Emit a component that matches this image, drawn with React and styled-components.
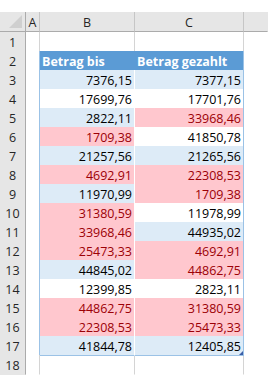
import React from "react";
import styled, { createGlobalStyle } from "styled-components";

const GlobalStyle = createGlobalStyle`
  html, body {
    margin: 0;
    padding: 0;
    background: #ffffff;
  }
  body {
    font-family: "Open Sans", "Liberation Sans", sans-serif;
  }
`;

const rows = [
  { b: "7376,15", c: "7377,15" },
  { b: "17699,76", c: "17701,76" },
  { b: "2822,11", c: "33968,46", cBad: true },
  { b: "1709,38", c: "41850,78", bBad: true },
  { b: "21257,56", c: "21265,56" },
  { b: "4692,91", c: "22308,53", bBad: true, cBad: true },
  { b: "11970,99", c: "1709,38", cBad: true },
  { b: "31380,59", c: "11978,99", bBad: true },
  { b: "33968,46", c: "44935,02", bBad: true },
  { b: "25473,33", c: "4692,91", bBad: true, cBad: true },
  { b: "44845,02", c: "44862,75", cBad: true },
  { b: "12399,85", c: "2823,11" },
  { b: "44862,75", c: "31380,59", bBad: true, cBad: true },
  { b: "22308,53", c: "25473,33", bBad: true, cBad: true },
  { b: "41844,78", c: "12405,85" },
];

function App() {
  return (
    <>
      <GlobalStyle />
      <Sheet>
        <Row $head>
          <Corner>
            <CornerMark />
          </Corner>
          <ColHead>A</ColHead>
          <ColHead>B</ColHead>
          <ColHead>C</ColHead>
          <ColHead $last />
        </Row>

        <Row>
          <RowNum>1</RowNum>
          <Cell />
          <Cell />
          <Cell />
          <Cell $last />
        </Row>

        <Row>
          <RowNum>2</RowNum>
          <Cell $edge />
          <TableHead>Betrag bis</TableHead>
          <TableHead $right>Betrag gezahlt</TableHead>
          <Cell $last />
        </Row>

        {rows.map((r, i) => {
          const band = i % 2 === 0;
          const isLast = i === rows.length - 1;
          return (
            <Row key={i}>
              <RowNum>{i + 3}</RowNum>
              <Cell $edge />
              <Amount $band={band} $bad={r.bBad}>
                {r.b}
              </Amount>
              <Amount $band={band} $bad={r.cBad} $right>
                {r.c}
                {isLast && <Handle />}
              </Amount>
              <Cell $last />
            </Row>
          );
        })}

        <Row $end>
          <RowNum $end>18</RowNum>
          <Cell $end />
          <Cell $end />
          <Cell $end />
          <Cell $last $end />
        </Row>
      </Sheet>
    </>
  );
}

export default App;

const Sheet = styled.div`
  padding-top: 12px;
  width: 268px;
  height: 384px;
  box-sizing: border-box;
  overflow: hidden;
  font-size: 12.5px;
  color: #000000;
`;

const Row = styled.div`
  display: grid;
  grid-template-columns: 26px 14px 95px 109px 1fr;
  height: ${(p) => (p.$head ? "20px" : p.$end ? "18px" : "19px")};
`;

const headCell = `
  background: #e6e6e6;
  box-sizing: border-box;
  color: #262626;
  display: flex;
  align-items: center;
  justify-content: center;
`;

const Corner = styled.div`
  ${headCell}
  position: relative;
  border-right: 1px solid #ababab;
  border-bottom: 1px solid #ababab;
`;

const CornerMark = styled.div`
  position: absolute;
  right: 3px;
  bottom: 3px;
  width: 0;
  height: 0;
  border-left: 13px solid transparent;
  border-bottom: 13px solid #cfcfcf;
`;

const ColHead = styled.div`
  ${headCell}
  border-right: 1px solid ${(p) => (p.$last ? "transparent" : "#c6c6c6")};
  border-bottom: 1px solid #ababab;
  padding-top: 1px;
`;

const RowNum = styled.div`
  ${headCell}
  border-right: 1px solid #ababab;
  border-bottom: 1px solid ${(p) => (p.$end ? "transparent" : "#c6c6c6")};
  padding-top: 2px;
`;

const Cell = styled.div`
  box-sizing: border-box;
  background: #ffffff;
  border-right: 1px solid
    ${(p) => (p.$last ? "transparent" : p.$edge ? "#9bc2e6" : "#d4d4d4")};
  border-bottom: 1px solid ${(p) => (p.$end ? "transparent" : "#d4d4d4")};
`;

const TableHead = styled.div`
  box-sizing: border-box;
  background: #5b9bd5;
  color: #ffffff;
  font-weight: 700;
  padding: 2px 0 0 2px;
  display: flex;
  align-items: center;
  white-space: nowrap;
  border-right: 1px solid ${(p) => (p.$right ? "#9bc2e6" : "#5b9bd5")};
  border-bottom: 1px solid #9bc2e6;
`;

const Amount = styled.div`
  position: relative;
  box-sizing: border-box;
  background: ${(p) => (p.$bad ? "#ffc7ce" : p.$band ? "#ddebf7" : "#ffffff")};
  color: ${(p) => (p.$bad ? "#9c0006" : "#000000")};
  display: flex;
  align-items: center;
  justify-content: flex-end;
  padding: 2px 2px 0 0;
  white-space: nowrap;
  border-right: 1px solid ${(p) => (p.$right ? "#9bc2e6" : "#ffffff")};
  border-bottom: 1px solid #9bc2e6;
`;

const Handle = styled.span`
  position: absolute;
  right: 0;
  bottom: 0;
  width: 0;
  height: 0;
  border-left: 4px solid transparent;
  border-bottom: 4px solid #3b5ea8;
`;
